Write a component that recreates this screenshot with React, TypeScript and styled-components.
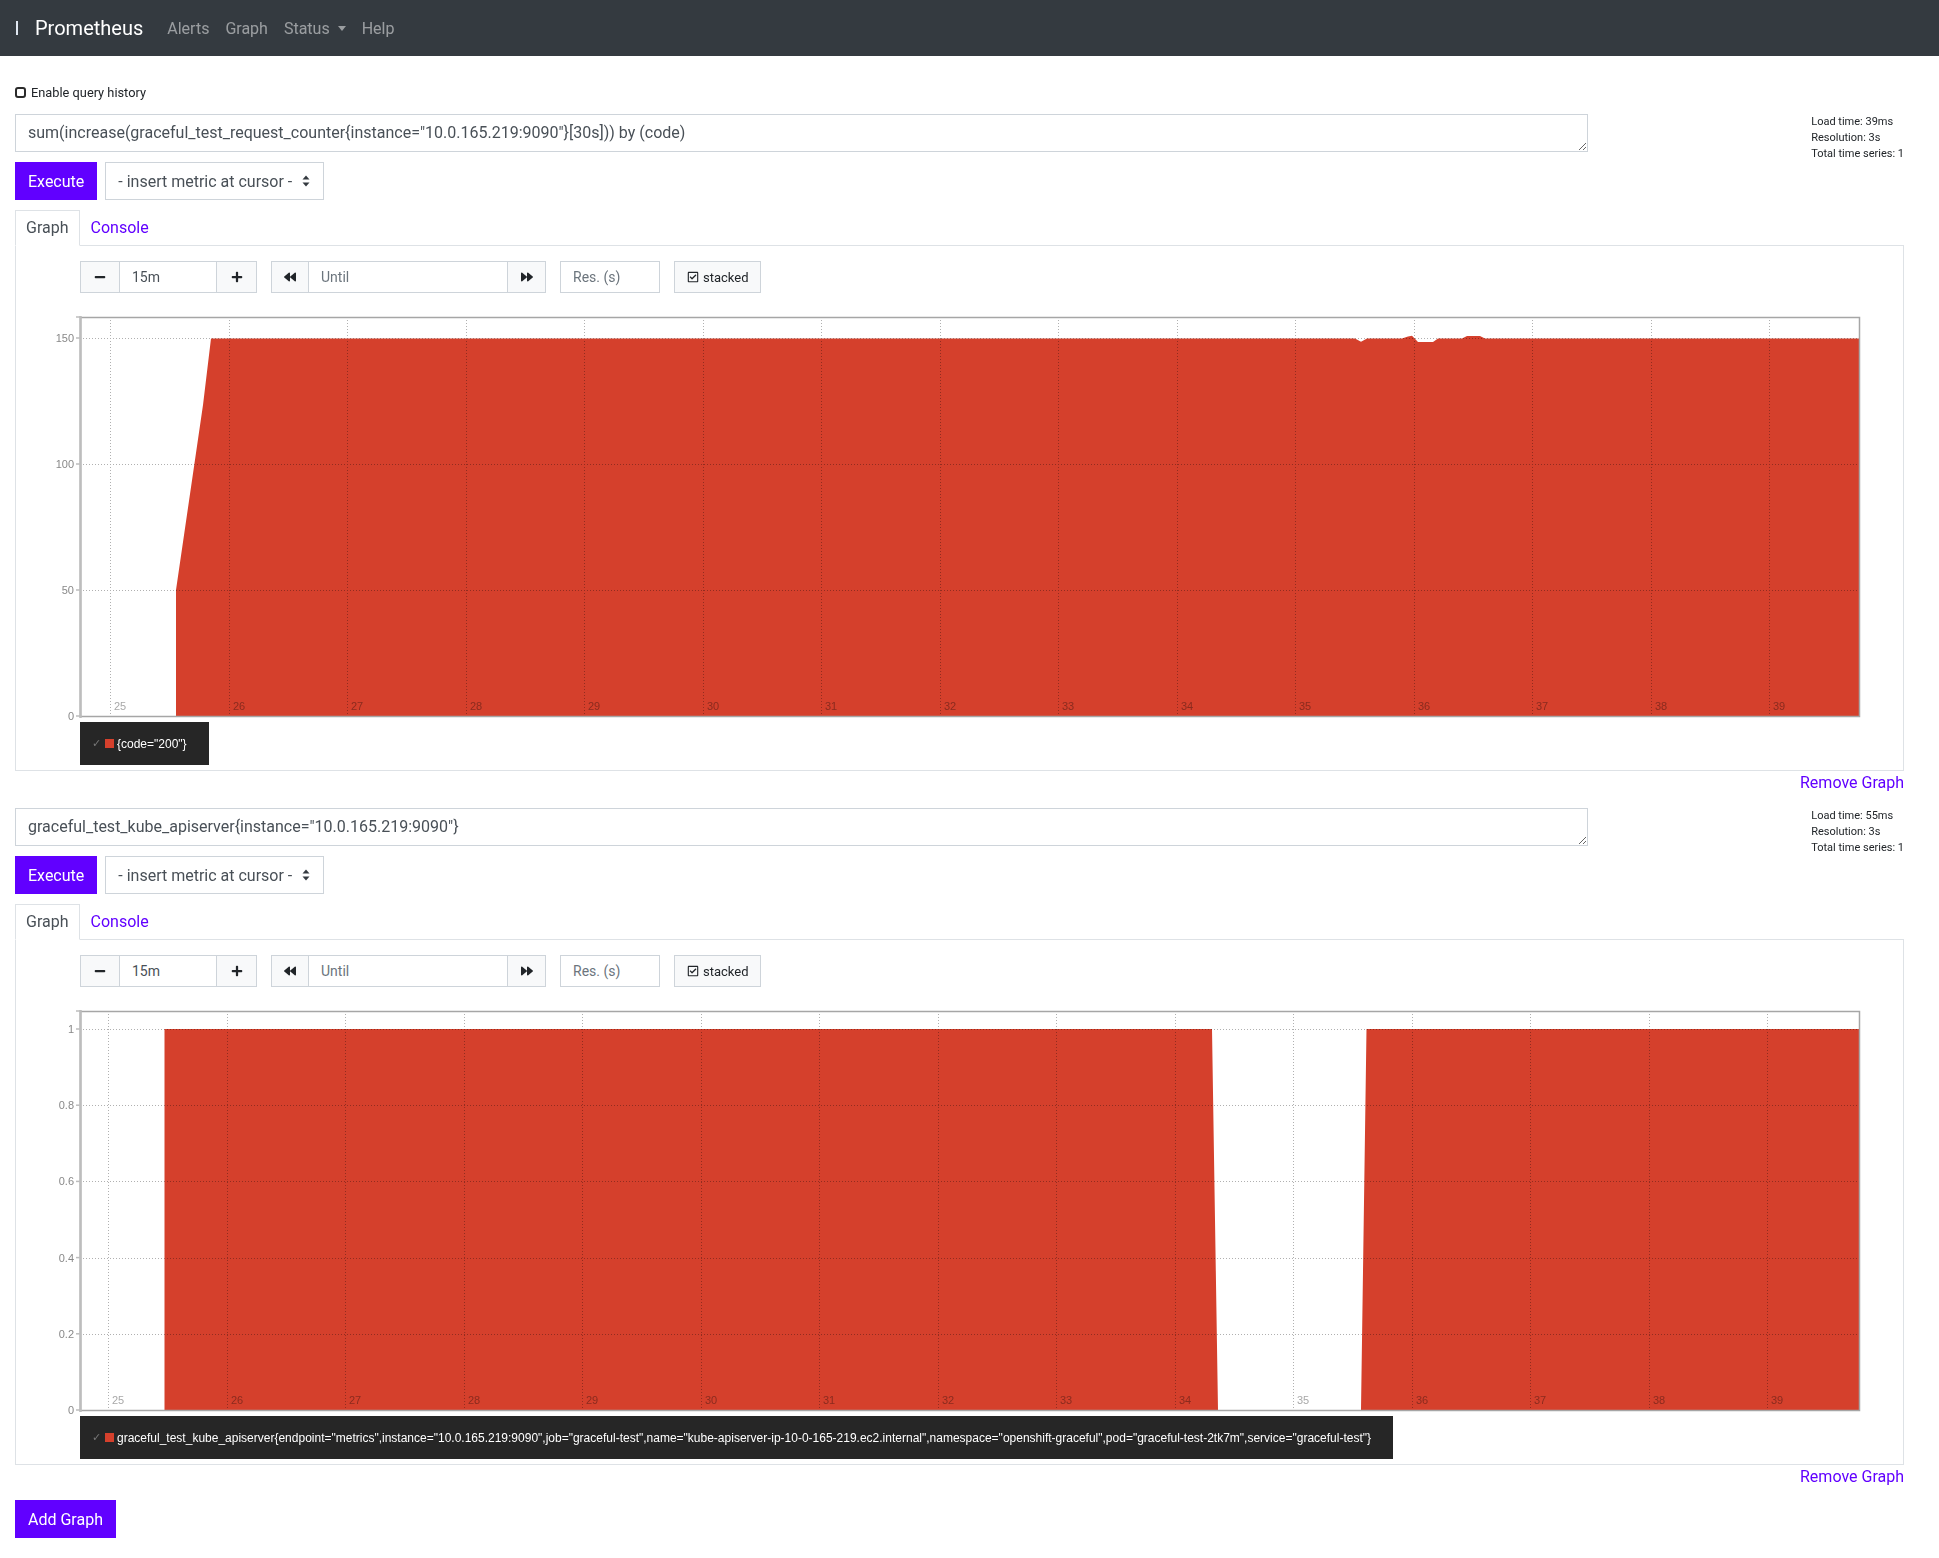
import React from "react";
import styled, { createGlobalStyle } from "styled-components";
import { FaMinus, FaPlus, FaBackward, FaForward, FaRegCheckSquare } from "react-icons/fa";

const PURPLE = "#6100ff";
const RED = "#d5402c";

const GlobalStyle = createGlobalStyle`
  * { box-sizing: border-box; }
  body {
    margin: 0;
    background: #fff;
    color: #212529;
    font-family: Roboto, "Liberation Sans", sans-serif;
  }
`;

const Navbar = styled.nav`
  height: 56px;
  background: #343a40;
  display: flex;
  align-items: center;
  padding: 0 16px;
`;

const Toggler = styled.span`
  width: 2px;
  height: 14px;
  background: #dfe6f0;
  margin-right: 17px;
`;

const Brand = styled.a`
  color: #fff;
  font-size: 20px;
  margin-right: 16px;
  text-decoration: none;
`;

const NavLink = styled.a`
  display: flex;
  align-items: center;
  padding: 8px;
  font-size: 16px;
  color: rgba(255, 255, 255, 0.5);
  text-decoration: none;
`;

const Caret = styled.span`
  margin-left: 8px;
  border-top: 5px solid rgba(255, 255, 255, 0.5);
  border-left: 4.5px solid transparent;
  border-right: 4.5px solid transparent;
`;

const Page = styled.main`
  padding: 27px 35px 20px 15px;
`;

const HistoryToggle = styled.label`
  display: flex;
  align-items: center;
  gap: 5px;
  font-size: 12.8px;
  line-height: 19px;
  margin-bottom: 12px;
`;

const CheckBox = styled.span`
  width: 11px;
  height: 11px;
  border: 2px solid #2b2b2b;
  border-radius: 3px;
`;

const QueryRow = styled.div`
  display: grid;
  grid-template-columns: 1573px 1fr;
  align-items: start;
  height: 38px;
`;

const ExprInput = styled.textarea`
  display: block;
  width: 100%;
  height: 38px;
  padding: 6px 12px;
  font: 16px/24px Roboto, "Liberation Sans", sans-serif;
  color: #495057;
  border: 1px solid #ced4da;
  border-radius: 0;
  resize: vertical;
  overflow: hidden;
  outline: none;
`;

const Stats = styled.div`
  justify-self: end;
  font-size: 11px;
  line-height: 16px;
  color: #212529;
`;

const ExecRow = styled.div`
  display: flex;
  gap: 8px;
  margin-top: 10px;
`;

const PrimaryButton = styled.button`
  height: 38px;
  padding: 0 13px;
  border: none;
  border-radius: 0;
  background: ${PURPLE};
  color: #fff;
  font: 16px Roboto, "Liberation Sans", sans-serif;
`;

const MetricSelect = styled.div`
  width: 219px;
  height: 38px;
  display: flex;
  align-items: center;
  justify-content: space-between;
  padding: 0 13px 0 12px;
  border: 1px solid #ced4da;
  font-size: 16px;
  color: #495057;
`;

const Tabs = styled.div`
  display: flex;
  margin-top: 10px;
  border-bottom: 1px solid #dee2e6;
`;

const Tab = styled.a<{ $active?: boolean }>`
  padding: 5px 10px;
  font-size: 16px;
  line-height: 24px;
  margin-bottom: -1px;
  border: 1px solid ${(p) => (p.$active ? "#dee2e6" : "transparent")};
  border-bottom-color: ${(p) => (p.$active ? "#fff" : "transparent")};
  color: ${(p) => (p.$active ? "#495057" : PURPLE)};
  background: ${(p) => (p.$active ? "#fff" : "transparent")};
`;

const TabContent = styled.div`
  border: 1px solid #dee2e6;
  border-top: none;
  padding: 15px 0 5px 0;
`;

const Controls = styled.div`
  display: flex;
  gap: 14px;
  margin-left: 64px;
  height: 32px;
`;

const InputGroup = styled.div`
  display: flex;
  & > * + * {
    margin-left: -1px;
  }
`;

const IconButton = styled.button<{ $w: number }>`
  width: ${(p) => p.$w}px;
  height: 32px;
  display: flex;
  align-items: center;
  justify-content: center;
  padding: 0;
  background: #f8f9fa;
  border: 1px solid #ced4da;
  border-radius: 0;
  color: #212529;
  svg {
    width: 12px;
    height: 12px;
  }
`;

const SmallInput = styled.div<{ $w: number; $placeholder?: boolean }>`
  width: ${(p) => p.$w}px;
  height: 32px;
  display: flex;
  align-items: center;
  padding: 0 12px;
  border: 1px solid #ced4da;
  background: #fff;
  font-size: 14px;
  color: ${(p) => (p.$placeholder ? "#6c757d" : "#495057")};
`;

const StackedButton = styled.button`
  height: 32px;
  display: flex;
  align-items: center;
  gap: 4px;
  padding: 0 11px 0 12px;
  background: #f8f9fa;
  border: 1px solid #ced4da;
  border-radius: 0;
  color: #212529;
  font: 13px Roboto, "Liberation Sans", sans-serif;
  svg {
    width: 12px;
    height: 12px;
  }
`;

const ChartSvg = styled.svg`
  display: block;
  margin-top: 12px;
  overflow: visible;
  font-family: "Liberation Sans", Arial, sans-serif;
  .overlay {
    mix-blend-mode: multiply;
  }
`;

const Legend = styled.div`
  display: flex;
  align-items: center;
  width: fit-content;
  height: 43px;
  margin: 0 0 0 64px;
  padding: 0 22px 0 12px;
  background: #262626;
  color: #fff;
  font: 12px "Liberation Sans", Arial, sans-serif;
  white-space: nowrap;
`;

const LegendCheck = styled.span`
  color: #777;
  width: 8px;
  margin-right: 5px;
  font-size: 11px;
`;

const LegendSwatch = styled.span`
  width: 9px;
  height: 9px;
  background: ${RED};
  margin-right: 3px;
`;

const RemoveRow = styled.div`
  text-align: right;
  line-height: 24px;
  margin-bottom: 13px;
  a {
    color: ${PURPLE};
    font-size: 16px;
  }
`;

const AddButton = styled(PrimaryButton)`
  margin-top: -2px;
`;

const PLOT = { left: 64, right: 1843, top: 12, bottom: 411 };

type Tick = { v: number; label: string };

type ChartProps = {
  ticks: Tick[];
  pxPerUnit: number;
  area: string;
  gridStart: number;
};

function Chart({ ticks, pxPerUnit, area, gridStart }: ChartProps) {
  const yOf = (v: number) => PLOT.bottom - v * pxPerUnit;
  const xs = Array.from({ length: 15 }, (_, i) => Math.round(gridStart + i * 118.5) + 0.5);
  return (
    <ChartSvg width={1887} height={417}>
      <path d={area} fill={RED} />
      <g className="overlay" stroke="#b0b0b0" strokeDasharray="1 2" strokeWidth={1}>
        {xs.map((x) => (
          <line key={x} x1={x} x2={x} y1={PLOT.top} y2={PLOT.bottom} />
        ))}
        {ticks
          .filter((t) => t.v > 0)
          .map((t) => (
            <line key={t.label} x1={PLOT.left} x2={PLOT.right} y1={Math.round(yOf(t.v)) + 0.5} y2={Math.round(yOf(t.v)) + 0.5} />
          ))}
      </g>
      <rect
        x={PLOT.left + 0.5}
        y={PLOT.top + 0.5}
        width={PLOT.right - PLOT.left}
        height={PLOT.bottom - PLOT.top}
        fill="none"
        stroke="#a6a6a6"
        strokeWidth={1.5}
      />
      <line x1={PLOT.left + 0.5} x2={PLOT.left + 0.5} y1={PLOT.top - 1} y2={PLOT.bottom + 2} stroke="#bdbdbd" strokeWidth={2.5} />
      <g stroke="#bdbdbd" strokeWidth={1.5}>
        <line x1={60} x2={PLOT.left} y1={PLOT.top} y2={PLOT.top} />
        {ticks.map((t) => (
          <line key={t.label} x1={60} x2={PLOT.left} y1={yOf(t.v)} y2={yOf(t.v)} />
        ))}
      </g>
      <g fontSize={11} fill="#888" textAnchor="end">
        {ticks.map((t) => (
          <text key={t.label} x={58} y={yOf(t.v) + 4}>
            {t.label}
          </text>
        ))}
      </g>
      <g className="overlay" fontSize={11} fill="#a8a8a8">
        {xs.map((x, i) => (
          <text key={x} x={x + 3.5} y={405}>
            {25 + i}
          </text>
        ))}
      </g>
    </ChartSvg>
  );
}

type PanelProps = {
  expr: string;
  loadTime: string;
  chart: ChartProps;
  legend: string;
};

function GraphPanel({ expr, loadTime, chart, legend }: PanelProps) {
  return (
    <section>
      <QueryRow>
        <ExprInput defaultValue={expr} rows={1} spellCheck={false} />
        <Stats>
          <div>Load time: {loadTime}</div>
          <div>Resolution: 3s</div>
          <div>Total time series: 1</div>
        </Stats>
      </QueryRow>
      <ExecRow>
        <PrimaryButton>Execute</PrimaryButton>
        <MetricSelect>
          <span>- insert metric at cursor -</span>
          <svg width="8" height="12" viewBox="0 0 8 12">
            <path d="M4 0.5 L7.5 4.5 H0.5 Z M0.5 7.5 H7.5 L4 11.5 Z" fill="#343a40" />
          </svg>
        </MetricSelect>
      </ExecRow>
      <Tabs>
        <Tab $active>Graph</Tab>
        <Tab>Console</Tab>
      </Tabs>
      <TabContent>
        <Controls>
          <InputGroup>
            <IconButton $w={40}>
              <FaMinus />
            </IconButton>
            <SmallInput $w={98}>15m</SmallInput>
            <IconButton $w={41}>
              <FaPlus />
            </IconButton>
          </InputGroup>
          <InputGroup>
            <IconButton $w={38}>
              <FaBackward />
            </IconButton>
            <SmallInput $w={200} $placeholder>
              Until
            </SmallInput>
            <IconButton $w={39}>
              <FaForward />
            </IconButton>
          </InputGroup>
          <SmallInput $w={100} $placeholder>
            Res. (s)
          </SmallInput>
          <StackedButton>
            <FaRegCheckSquare />
            stacked
          </StackedButton>
        </Controls>
        <Chart {...chart} />
        <Legend>
          <LegendCheck>✓</LegendCheck>
          <LegendSwatch />
          {legend}
        </Legend>
      </TabContent>
      <RemoveRow>
        <a>Remove Graph</a>
      </RemoveRow>
    </section>
  );
}

const requestArea =
  "M160 411 L160 285 L187 100 L195 33.5 L1339 33.5 L1345 36.7 L1351 33.5 L1386 33.5 L1392 31.5 L1396 30.7 " +
  "L1402 37 L1417 37 L1422 33.5 L1446 33.5 L1451 31 L1464 31 L1469 33.5 L1843 33.5 L1843 411 Z";

const apiserverArea =
  "M148.5 411 L148.5 30 L1196 30 L1202 411 Z M1345 411 L1350.5 30 L1843 30 L1843 411 Z";

const panels: PanelProps[] = [
  {
    expr: 'sum(increase(graceful_test_request_counter{instance="10.0.165.219:9090"}[30s])) by (code)',
    loadTime: "39ms",
    legend: '{code="200"}',
    chart: {
      ticks: [
        { v: 0, label: "0" },
        { v: 50, label: "50" },
        { v: 100, label: "100" },
        { v: 150, label: "150" },
      ],
      pxPerUnit: 2.52,
      area: requestArea,
      gridStart: 94,
    },
  },
  {
    expr: 'graceful_test_kube_apiserver{instance="10.0.165.219:9090"}',
    loadTime: "55ms",
    legend:
      'graceful_test_kube_apiserver{endpoint="metrics",instance="10.0.165.219:9090",job="graceful-test",name="kube-apiserver-ip-10-0-165-219.ec2.internal",namespace="openshift-graceful",pod="graceful-test-2tk7m",service="graceful-test"}',
    chart: {
      ticks: [
        { v: 0, label: "0" },
        { v: 0.2, label: "0.2" },
        { v: 0.4, label: "0.4" },
        { v: 0.6, label: "0.6" },
        { v: 0.8, label: "0.8" },
        { v: 1, label: "1" },
      ],
      pxPerUnit: 381,
      area: apiserverArea,
      gridStart: 92,
    },
  },
];

export default function App() {
  return (
    <>
      <GlobalStyle />
      <Navbar>
        <Toggler />
        <Brand>Prometheus</Brand>
        <NavLink>Alerts</NavLink>
        <NavLink>Graph</NavLink>
        <NavLink>
          Status
          <Caret />
        </NavLink>
        <NavLink>Help</NavLink>
      </Navbar>
      <Page>
        <HistoryToggle>
          <CheckBox />
          Enable query history
        </HistoryToggle>
        {panels.map((p) => (
          <GraphPanel key={p.loadTime} {...p} />
        ))}
        <AddButton>Add Graph</AddButton>
      </Page>
    </>
  );
}
